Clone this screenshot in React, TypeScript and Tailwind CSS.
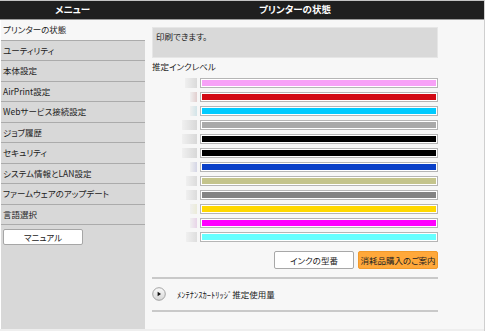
const menuItems = [
  'プリンターの状態',
  'ユーティリティ',
  '本体設定',
  'AirPrint設定',
  'Webサービス接続設定',
  'ジョブ履歴',
  'セキュリティ',
  'システム情報とLAN設定',
  'ファームウェアのアップデート',
  '言語選択',
];

// ink tank rows: placeholder icon width / tint, then level bar colour
const inks = [
  { w: 12, tint: '#dadada', color: '#f7a1f7' },
  { w: 7, tint: '#e2cfcf', color: '#d20a14' },
  { w: 7, tint: '#d2e4e8', color: '#00cbff' },
  { w: 15, tint: '#d8d8d8', color: '#a9a9a9' },
  { w: 15, tint: '#d8d8d8', color: '#000000' },
  { w: 15, tint: '#d8d8d8', color: '#000000' },
  { w: 7, tint: '#d5d6e6', color: '#0a40c8' },
  { w: 11, tint: '#dcdcdc', color: '#c4c48c' },
  { w: 11, tint: '#dcdcdc', color: '#838383' },
  { w: 7, tint: '#ebebd8', color: '#ffd800' },
  { w: 7, tint: '#e8d4e8', color: '#ff00ff' },
  { w: 11, tint: '#dedede', color: '#66ffff' },
];

const font = "font-['Noto_Sans_CJK_JP','Noto_Sans',sans-serif] [font-feature-settings:'palt']";

function PlayIcon() {
  return (
    <svg width="14" height="14" viewBox="0 0 14 14">
      <defs>
        <linearGradient id="pg" x1="0" y1="0" x2="0" y2="1">
          <stop offset="0" stopColor="#fafafa" />
          <stop offset="1" stopColor="#d6d6d6" />
        </linearGradient>
      </defs>
      <circle cx="7" cy="7" r="6.3" fill="url(#pg)" stroke="#9a9a9a" strokeWidth="0.9" />
      <path d="M5.6 4.8 L9 7 L5.6 9.2 Z" fill="#111" />
    </svg>
  );
}

export default function App() {
  return (
    <div className={`w-[485px] h-[331px] flex flex-col bg-[#f7f7f7] border-r border-[#cfcfcf] overflow-hidden text-[#222] ${font}`}>
      {/* Title bar */}
      <div className="flex h-[20px] shrink-0 bg-[#1f1f1f] border-t border-[#c4c4c4] border-b border-b-[#9a9a9a] text-white font-bold text-[9.5px] leading-none">
        <div className="w-[145px] flex items-center justify-center">メニュー</div>
        <div className="pl-[7px]">
          <div className="w-[286px] h-full flex items-center justify-center">プリンターの状態</div>
        </div>
      </div>

      <div className="flex flex-1 border-b-2 border-[#eeeeee]">
        {/* Side menu */}
        <div className="w-[145px] bg-[#d8d8d8] border-l border-white flex flex-col text-[8.5px]">
          {menuItems.map((item, i) => (
            <div
              key={item}
              className={`h-[20.5px] flex items-center pl-[2px] border-b border-[#ababab] ${
                i === 0 ? 'bg-[#f7f7f7]' : ''
              }`}
            >
              {item}
            </div>
          ))}
          <button className="mt-[4px] ml-[2px] w-[80px] h-[16px] bg-white border border-[#a6a6a6] rounded-[2px] text-[8.5px] leading-none flex items-center justify-center">
            マニュアル
          </button>
        </div>

        {/* Status panel */}
        <div className="flex-1 pl-[7px] pt-[7px]">
          <div className="w-[286px] flex flex-col">
            <div className="h-[31px] bg-[#d9d9d9] border border-[#e6e6e6] px-[3px] pt-[4px] text-[8.5px] leading-none">
              印刷できます。
            </div>
            <div className="mt-[3px] text-[8.5px] leading-[10px]">推定インクレベル</div>

            <div className="mt-[7px] flex flex-col gap-[4px]">
              {inks.map((ink, i) => (
                <div key={i} className="flex items-center justify-end gap-[3px]">
                  <div
                    className="h-[10px] blur-[0.5px]"
                    style={{ width: ink.w, background: `linear-gradient(90deg, #f0f0f0, ${ink.tint})` }}
                  />
                  <div className="w-[238px] h-[10px] bg-white border border-[#b5b5b5] p-[1px]">
                    <div className="h-full" style={{ background: ink.color }} />
                  </div>
                </div>
              ))}
            </div>

            <div className="mt-[9px] flex justify-end gap-[4px] text-[8.5px] leading-none">
              <button className="w-[80px] h-[18px] bg-white border border-[#a8a8a8] rounded-[2px] flex items-center justify-center">
                インクの型番
              </button>
              <button className="w-[80px] h-[18px] bg-[#ffa83a] border border-[#f29a2a] rounded-[2px] flex items-center justify-center">
                消耗品購入のご案内
              </button>
            </div>

            <div className="mt-[8px] h-[2px] bg-[#c9c9c9]" />
            <div className="mt-[8px] h-[14px] flex items-center gap-[11px]">
              <PlayIcon />
              <span className="text-[8.5px] leading-none">ﾒﾝﾃﾅﾝｽｶｰﾄﾘｯｼﾞ推定使用量</span>
            </div>
            <div className="mt-[9px] h-[2px] bg-[#c9c9c9]" />
          </div>
        </div>
      </div>
    </div>
  );
}
